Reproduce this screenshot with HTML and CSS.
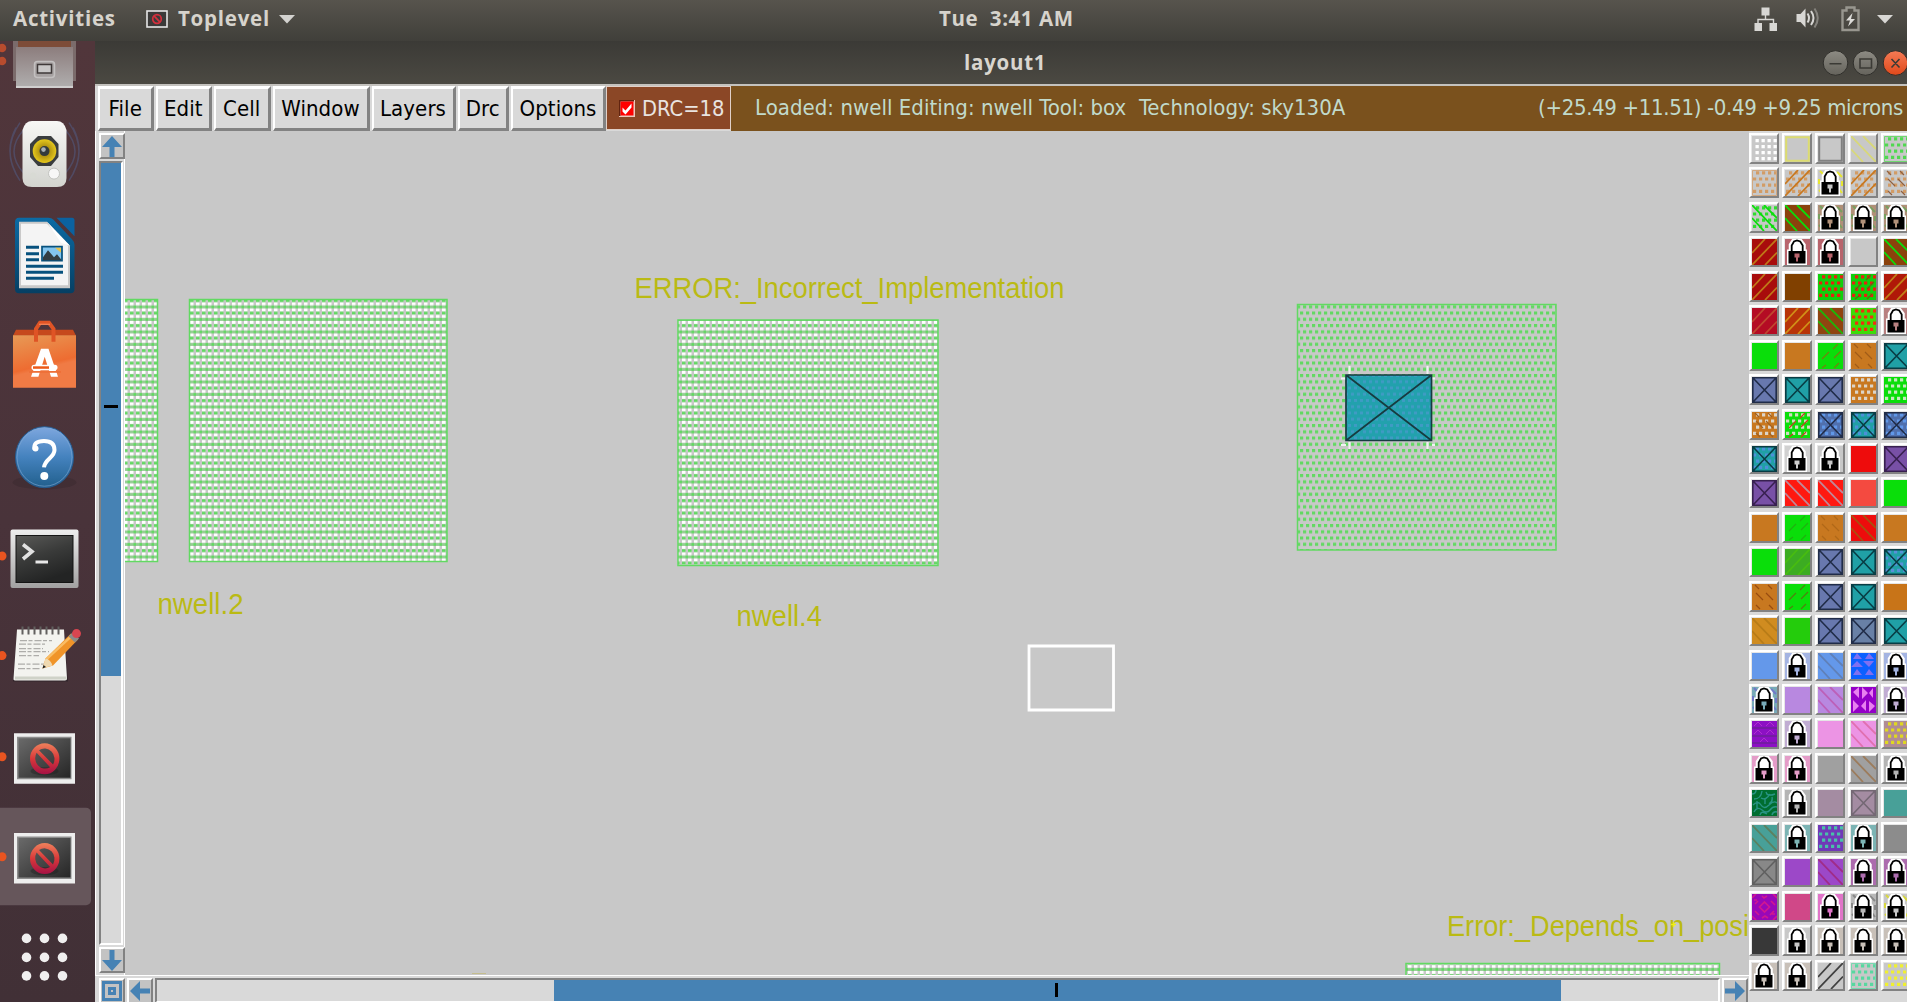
FILE: index.html
```html
<!DOCTYPE html>
<html lang="en">
<head>
<meta charset="utf-8">
<title>layout1</title>
<link rel="stylesheet" href="styles.css">
</head>
<body>
<header class="topbar">
  <span class="activities">Activities</span>
  <svg class="app-icon" width="22" height="18" viewBox="0 0 22 18"><rect x="1" y="1" width="20" height="16" fill="#3b3a39" stroke="#e6e6e6" stroke-width="1.6"/><g fill="none" stroke="#d42f3c" stroke-width="1.7"><circle cx="11" cy="9" r="4.3"/><path d="M8 5.8l6 6.4"/></g></svg>
  <span class="app-name">Toplevel</span>
  <svg class="caret" width="16" height="9" viewBox="0 0 16 9"><path d="M0 0h16L8 8.500z" fill="#d3d2cf"/></svg>
  <span class="clock">Tue&nbsp; 3:41 AM</span>
  <svg class="tray" width="142" height="30" viewBox="1752 4 142 30">
    <g fill="#d8d7d4"><path d="M1761.500 7.500h8v8h-8zM1754.500 23h7.500v8h-7.500zM1769.500 23h7.500v8h-7.500z"/><path d="M1765.500 15v4.500M1758 24v-4.500h15.500v4.500" fill="none" stroke="#d8d7d4" stroke-width="1.400"/>
    <path d="M1796.500 14h4l5-5.500v19l-5-5.500h-4z"/><path d="M1877 15h16l-8 8.500z"/></g>
    <g fill="none" stroke-width="2"><path d="M1807.500 13.500q3 4.500 0 9" stroke="#d8d7d4"/><path d="M1811 11q5 7 0 14" stroke="#d8d7d4"/><path d="M1814.500 8.500q6.500 9.500 0 19" stroke="#85837d"/>
    <path d="M1842.500 10.500h4v-3h8v3h4v19.500h-16z" stroke="#98968f" stroke-width="2.400"/></g>
    <path d="M1852.500 13l-6.500 7.500h4l-2 6 7-7.500h-4z" fill="#dddcd9"/>
  </svg>
</header>
<div class="desktop">
  <nav class="dock" id="dock">
    <svg class="slot" viewBox="0 4 95 100.400"><defs><linearGradient id="drawer" x2="0" y2="1"><stop offset="0" stop-color="#8c7d7d"/><stop offset="1" stop-color="#b0aeae"/></linearGradient></defs>
      <path d="M13 41h63v40H13z" fill="#7b6b6b"/><path d="M18 41h53v6H18z" fill="#7d4c38"/><path d="M16 47h57v40H16z" fill="url(#drawer)"/><path d="M16 86h57v2H16z" fill="#d0cfcf"/>
      <rect x="34.500" y="61.500" width="20" height="16" rx="3" fill="#a6a1a1" stroke="#c3c0c0" stroke-width="1.500"/><rect x="37.500" y="64.500" width="14" height="8.500" fill="#c9c7c7" stroke="#3f3939" stroke-width="1.500"/>
      <g fill="#b84c2e"><circle cx="2" cy="48" r="4.300"/><circle cx="2" cy="61" r="4.300"/></g></svg>
    <svg class="slot" viewBox="0 104.400 95 100.400"><defs><linearGradient id="spk" x2="0" y2="1"><stop offset="0" stop-color="#f7f7f5"/><stop offset="1" stop-color="#d3d4cf"/></linearGradient><radialGradient id="cone"><stop offset="0" stop-color="#8a6c06"/><stop offset="1" stop-color="#e6c81d"/></radialGradient></defs>
      <g fill="none" stroke="#525b84" stroke-width="1.500" opacity=".55"><path d="M20 123q-20 29 0 58M24 130q-20 22 0 44M16 128q-12 23 0 46M69 123q20 29 0 58M65 130q20 22 0 44M73 128q12 23 0 46"/></g>
      <path d="M32 121.500h25q7 0 9.500 9v48q0 9-9.500 9H32q-9.500 0-9.500-9v-48q2.500-9 9.500-9z" fill="url(#spk)"/>
      <path d="M38 136.500h13l7.500 8v13l-7.500 9H38l-8-9v-13z" fill="#3a3d3e"/><circle cx="44.500" cy="151.500" r="11.800" fill="url(#cone)"/><circle cx="44.500" cy="151.500" r="5" fill="#333a3c"/><circle cx="43.500" cy="150" r="2.300" fill="#a9b0b3"/><circle cx="54" cy="174" r="5.500" fill="#f7f7f7" stroke="#c2c3bf"/><circle cx="33" cy="176" r="3" fill="#d8dad4"/></svg>
    <svg class="slot" viewBox="0 204.800 95 100.400"><defs><linearGradient id="writer" x2="0" y2="1"><stop offset="0" stop-color="#0b6ba5"/><stop offset="1" stop-color="#063f63"/></linearGradient></defs>
      <path d="M19 217.500h29.500q3 0 5 2l18 19q3 3 3 6V289q0 4-4 4H19q-4 0-4-4v-67q0-4.500 4-4.500z" fill="url(#writer)"/><path d="M56.500 217.500H72q2.500 0 2.500 2.500v16z" fill="#0b62a0"/>
      <path d="M19 221.500h28l23 24V288H19z" fill="#c9c9c9"/><path d="M21 223.500h26l21 22V285H21z" fill="#f4f4f4"/><path d="M47 221.500v0l23 24-9-3z" fill="#fff"/>
      <g fill="#07517d"><path d="M26 245.500h13v3H26zM26 252h13v3H26zM26 258h13v3H26zM26 264.500h37v3H26zM26 270.500h37v3H26zM26 276.500h28v3H26z"/></g><path d="M42 246.500h20v14H42z" fill="#83c5ef" stroke="#07517d" stroke-width="1.700"/><path d="M55 247.500h6v5z" fill="#e7c24c"/><path d="M43 260v-3l5-7 6 7 3-3 4 5v1z" fill="#333d42"/></svg>
    <svg class="slot" viewBox="0 305.200 95 100.400"><defs><linearGradient id="bag" x2=".3" y2="1"><stop offset="0" stop-color="#e79a56"/><stop offset=".65" stop-color="#ee6c31"/><stop offset=".72" stop-color="#f07b45"/></linearGradient></defs>
      <path d="M16 330h57l3 6H13z" fill="#c6491d"/><path d="M13 335.500h63V388H13z" fill="url(#bag)"/><path d="M36 342v-13l4-6h9l4.500 6v13" fill="none" stroke="#df5425" stroke-width="4"/><path d="M39 324.500h11" stroke="#f28356" stroke-width="1.300"/>
      <path d="M41 349h7.500l9.500 28h-7l-6.300-20-6.300 20H31z" fill="#fff"/><rect x="31.500" y="365" width="26" height="5.500" rx="2.700" fill="#fff"/><path d="M33 366.500h16v2.500H33z" fill="#ec5a18"/><path d="M29 373h32v-1.800H29z" fill="#ee7038"/></svg>
    <svg class="slot" viewBox="0 405.600 95 100.400"><defs><linearGradient id="help" x2="0" y2="1"><stop offset="0" stop-color="#7ea7df"/><stop offset=".5" stop-color="#4482be"/><stop offset="1" stop-color="#215f8c"/></linearGradient></defs>
      <ellipse cx="44.500" cy="482" rx="32" ry="7" fill="#35242b" opacity=".35"/><ellipse cx="44.500" cy="456.800" rx="29" ry="30.500" fill="url(#help)" stroke="#245b91"/><ellipse cx="44.500" cy="456.800" rx="27.500" ry="29" fill="none" stroke="#80a8d4" stroke-width="1" opacity=".6"/>
      <path d="M34.500 449Q33 440.500 44 440.500q10.500 0 10.500 9 0 4-5 8.500t-5.500 9" fill="none" stroke="#fff" stroke-width="4"/><circle cx="35.500" cy="448" r="3" fill="#fff"/><circle cx="44.300" cy="475.500" r="4" fill="#fff"/></svg>
    <svg class="slot" viewBox="0 506 95 100.400"><defs><linearGradient id="tray" x2="0" y2="1"><stop offset="0" stop-color="#eee"/><stop offset="1" stop-color="#a2a1a1"/></linearGradient><linearGradient id="screen" x2=".4" y2="1"><stop offset="0" stop-color="#5a5a58"/><stop offset=".5" stop-color="#3a3b3a"/><stop offset="1" stop-color="#232424"/></linearGradient></defs>
      <rect x="10.500" y="529.500" width="68" height="58.500" rx="2" fill="url(#tray)"/><rect x="16" y="535.500" width="57" height="47" fill="url(#screen)" stroke="#151515"/><path d="M23 544.500l9 7-9 7.500" fill="none" stroke="#e2e2e2" stroke-width="3.600"/><path d="M35.500 560.500h12.500v3H35.500z" fill="#e8e8e8"/><circle class="dot" cx="2" cy="556" r="4.500"/></svg>
    <svg class="slot" viewBox="0 606.400 95 100.400"><path d="M17 631h47l4 51H13z" fill="#31252b"/><path d="M17 630h47l3 49q0 2-2 2H15q-2 0-1.500-2z" fill="#f3f3ef"/><path d="M15 677h51.500v3H15z" fill="#cfd2c8"/>
      <g stroke="#62605f" stroke-width="2" fill="none"><path d="M22.500 627v8M28.500 627v8M34.500 627v8M40.500 627v8M46.500 627v8M52.500 627v8M58.500 627v8"/></g><g stroke="#aeadaa" stroke-width="1.300" stroke-dasharray="7 1.500 4 2"><path d="M20 641h32M19 644.500h26M19 649h24M19 652h30M19 656h20M18 664.500h30M18 669h22"/></g>
      <path d="M42.500 669l3-10L71 634l7 6-25 26z" fill="#f09429"/><path d="M46 660L72 636" stroke="#f9bd65" stroke-width="2.500"/><path d="M42.500 669l3-10q5 1 7 7z" fill="#efd9b1"/><path d="M42.500 669l1-3.500 2.500 2z" fill="#222"/><path d="M68.500 637l4-4 6.500 6-4 4z" fill="#8b8b88"/><circle cx="76.500" cy="634" r="4.500" fill="#d84550"/><circle class="dot" cx="2" cy="656" r="4.500"/></svg>
    <svg class="slot" viewBox="0 706.800 95 100.400"><defs><linearGradient id="dark" x2="1" y2="1"><stop offset="0" stop-color="#6a6a6a"/><stop offset="1" stop-color="#262626"/></linearGradient><linearGradient id="ban" x2="0" y2="1"><stop offset="0" stop-color="#ee815b"/><stop offset=".5" stop-color="#d8383a"/><stop offset="1" stop-color="#a51145"/></linearGradient>
      <g id="generic"><path d="M14 733h61v50.500H14z" fill="#eee"/><path d="M17 736.500h54.500v42.500H17z" fill="#8d8d8d"/><path d="M18.500 738h52v39.500h-52z" fill="url(#dark)"/><ellipse cx="44.500" cy="771" rx="14" ry="4" fill="#1d1d1d" opacity=".4"/><path fill-rule="evenodd" d="M30 758.500a14.700 15.500 0 1 0 29.400 0a14.700 15.500 0 1 0-29.400 0zM39 750a10 10.500 0 0 1 14 14.300zM36.600 752.500l13.500 14.500a10 10.500 0 0 1-13.500-14.500z" fill="url(#ban)"/></g></defs>
      <use href="#generic"/><circle class="dot" cx="2" cy="756.500" r="4.500"/></svg>
    <svg class="slot" viewBox="0 807.200 95 100.400"><rect x="-6" y="808" width="97" height="97.500" rx="5" fill="#66565b"/><use href="#generic" y="100.300"/><circle class="dot" cx="2" cy="857" r="4.500"/></svg>
    <svg class="slot" viewBox="0 907.600 95 100.400"><g fill="#f0efef"><circle cx="26.500" cy="938" r="4.800"/><circle cx="44.500" cy="938" r="4.800"/><circle cx="62.500" cy="938" r="4.800"/><circle cx="26.500" cy="957" r="4.800"/><circle cx="44.500" cy="957" r="4.800"/><circle cx="62.500" cy="957" r="4.800"/><circle cx="26.500" cy="975.500" r="4.800"/><circle cx="44.500" cy="975.500" r="4.800"/><circle cx="62.500" cy="975.500" r="4.800"/></g></svg>
  </nav>
  <main class="window">
    <div class="titlebar"><span class="title">layout1</span>
      <svg class="controls" width="87" height="30" viewBox="1820 47 87 30"><defs><linearGradient id="gb" x2="0" y2="1"><stop offset="0" stop-color="#8d8b83"/><stop offset="1" stop-color="#65635c"/></linearGradient><linearGradient id="rb" x2="0" y2="1"><stop offset="0" stop-color="#f47b55"/><stop offset="1" stop-color="#e0481a"/></linearGradient></defs>
      <g stroke="#302f2b"><circle cx="1835.500" cy="62" r="12.300" fill="url(#gb)"/><circle cx="1865.500" cy="62" r="12.300" fill="url(#gb)"/><circle cx="1895.500" cy="62" r="12.300" fill="url(#rb)"/></g><g stroke="#3b3a35" stroke-width="1.600" fill="none"><path d="M1829.500 62.800h12M1860 58h11.500v9H1860zM1891.500 58l8 8.500M1899.500 58l-8 8.500"/></g></svg>
    </div>
    <div class="menubar">
      <button class="menu m-file">File</button><button class="menu m-edit">Edit</button><button class="menu m-cell">Cell</button><button class="menu m-window">Window</button><button class="menu m-layers">Layers</button><button class="menu m-drc">Drc</button><button class="menu m-options">Options</button>
      <label class="drc"><svg width="16" height="17" viewBox="0 0 16 17"><path d="M0 0h16v17H0z" fill="#e9c9bd"/><path d="M0 0h15v1.500H1.500V16H0z" fill="#612410"/><path d="M1.500 1.500h13v14h-13z" fill="#f00"/><path d="M3.500 7.500l3 3 6-7v4l-6 7-3-3z" fill="#fff"/></svg>DRC=18</label>
      <div class="status"><span class="loaded">Loaded: nwell Editing: nwell Tool: box&nbsp; Technology: sky130A</span><span class="coords">(+25.49 +11.51) -0.49 +9.25 microns</span></div>
    </div>
    <div class="workspace">
      <div class="view">
        <div class="upper">
          <div class="vscroll">
            <button class="arrow"><svg width="20" height="21" viewBox="0 0 20 21"><path d="M10 0l10 11h-7.500v10h-5V11H0z"/></svg></button>
            <div class="vtrack"><div class="vthumb"><i class="vmark"></i></div></div>
            <button class="arrow"><svg width="20" height="21" viewBox="0 0 20 21"><path d="M10 21L0 10h7.500V0h5v10H20z"/></svg></button>
          </div>
          <svg class="canvas" width="1624" height="844" viewBox="125 131 1624 844">
            <defs>
              <pattern id="dense" width="6" height="12.500" patternUnits="userSpaceOnUse" x="682" y="321"><path d="M0 0h3.500v3H0zM0 6.300h3.500v3H0z" fill="#fff"/><path d="M0 3.200h3.500v2.800H0z" fill="#62d962"/><path d="M0 9.500h6v2.800H0z" fill="#95cd93"/><path d="M3.500 9.500h2.500v2.800H3.500z" fill="#62d962"/></pattern>
              <pattern id="sparse" width="6" height="12.500" patternUnits="userSpaceOnUse" x="1300" y="311.500"><path d="M0 0h3.200v3.200H0zM3 6.250h3v3.200H3zM0 6.250h.2v3.200H0z" fill="#62d962"/></pattern>
              <pattern id="blue" width="6" height="12.500" patternUnits="userSpaceOnUse" x="1300" y="311.500"><path d="M0 0h3v3H0zM3 6.250h3v3H3z" fill="#3f9bc4"/></pattern>
            </defs>
            <g fill="url(#dense)" stroke="#62d962" stroke-width="1.500"><path d="M120 299.500h37.500V561.500H120z"/><path d="M189.500 561.500v-262h257.500v262z"/><path d="M678 320h260v245.500H678z"/><path d="M1406 980v-16.500h313.500V980"/></g>
            <path d="M1297.500 304.500h258.500v245.500h-258.500z" fill="url(#sparse)" stroke="#62d962" stroke-width="1.500"/>
            <path d="M1349.500 366v8M1427.500 366v8M1349.500 442v7M1427.500 442v7M1341 378.500h5M1432 378.500h3M1341 445h5M1432 445h3" stroke="#f2f2f2" stroke-width="2"/>
            <path d="M1346 375h85.500v65.500H1346z" fill="#22a1ad"/><path d="M1346 375h85.500v65.500H1346z" fill="url(#blue)"/><path d="M1346 375h85.500v65.500H1346zl85.500 65.500M1431.500 375L1346 440.500" fill="none" stroke="#173b40" stroke-width="1.700"/>
            <path d="M1029 646h84.500v64H1029z" fill="none" stroke="#fff" stroke-width="2.800"/>
            <path d="M472 973.500h14" stroke="#c4bd8e"/>
            <g class="label">
              <text x="634.500" y="298" textLength="430" lengthAdjust="spacingAndGlyphs">ERROR:_Incorrect_Implementation</text>
              <text x="157.500" y="613.500" textLength="86" lengthAdjust="spacingAndGlyphs">nwell.2</text>
              <text x="736.500" y="626" textLength="85.500" lengthAdjust="spacingAndGlyphs">nwell.4</text>
              <text x="1447" y="936" textLength="302" lengthAdjust="spacingAndGlyphs">Error:_Depends_on_posi</text>
            </g>
            <path d="M1671 924.500h5M1673.500 922v5" stroke="#efef13" stroke-width="1.500"/>
          </svg>
        </div>
        <div class="hscroll">
          <button class="arrow corner"><svg width="20" height="20" viewBox="0 0 20 20"><path d="M1.500 1.500h17v17h-17z" fill="none" stroke="#4682b4" stroke-width="3"/><path d="M7.500 7.500h5v5h-5z" fill="none" stroke="#4682b4" stroke-width="3"/></svg></button>
          <button class="arrow"><svg width="20" height="20" viewBox="0 0 20 20"><path d="M0 10L10 0v7.500h10v5H10V20z"/></svg></button>
          <div class="htrack"><div class="hthumb"><i class="hmark"></i></div></div>
          <button class="arrow"><svg width="20" height="20" viewBox="0 0 20 20"><path d="M20 10L10 0v7.500H0v5h10V20z"/></svg></button>
        </div>
      </div>
      <div class="palette" id="palette"></div>
    </div>
  </main>
</div>
<script src="palette.js"></script>
</body>
</html>
```
FILE: styles.css
```css
* { box-sizing: border-box; }
body { margin: 0; width: 1907px; height: 1002px; overflow: hidden; background: #c8c8c8; font-family: "DejaVu Sans Condensed", "DejaVu Sans", sans-serif; font-stretch: condensed; }
svg { display: block; flex: none; }
button { font: inherit; padding: 0; margin: 0; border: 0; border-radius: 0; }
.topbar { height: 41px; display: flex; align-items: center; padding: 0 13px; background: linear-gradient(#57544d, #403f3a); color: #d6d3cc; font: bold 20.500px/37px "Open Sans", "Noto Sans", sans-serif; letter-spacing: .75px; }
.topbar > span { height: 41px; white-space: nowrap; }
.activities { width: 133px; }
.app-icon { margin-top: -3px; }
.app-name { margin-left: 10px; width: 101px; }
.caret { margin-top: -3px; }
.clock { margin-left: 644px; letter-spacing: .55px; }
.tray { margin-left: auto; margin-top: -3px; }
.desktop { display: flex; height: 961px; }
.dock { width: 95px; height: 961px; overflow: hidden; background: linear-gradient(#51363b, #49333a 50%, #413036); }
.slot { width: 95px; height: 100.400px; }
.slot:first-child { margin-top: -37px; }
.dot { fill: #e95420; }
.window { width: 1812px; display: flex; flex-direction: column; }
.titlebar { height: 43px; display: flex; align-items: center; justify-content: flex-end; background: linear-gradient(#3b3a36, #4b4942); color: #d9d6cf; font: bold 20.500px/43px "Open Sans", "Noto Sans", sans-serif; letter-spacing: .75px; }
.title { flex: 1; padding-left: 869px; }
.menubar { height: 47px; display: flex; background: #d9d9d9; border-top: 2px solid #c4c2be; padding-left: 3px; font-size: 22px; }
.menu { height: 45px; margin-right: 2px; background: #d9d9d9; color: #000; border: solid; border-width: 3px 3px 3px 2px; border-color: #fff #828282 #828282 #fff; padding-bottom: 1px; letter-spacing: .1px; }
.m-file { width: 55.500px; } .m-edit { width: 56.500px; } .m-cell { width: 56.500px; } .m-window { width: 97px; } .m-layers { width: 84px; } .m-drc { width: 51.500px; } .m-options { width: 95px; margin-right: 0; }
.drc { width: 125px; height: 44px; display: flex; align-items: center; padding: 1px 0 0 12px; background: #8b4726; border: 1px solid #e0d0c8; color: #e9e4e0; gap: 7px; white-space: nowrap; font-size: 21.700px; }
.status { flex: 1; display: flex; justify-content: space-between; padding: 0 4px 0 24px; line-height: 44px; background: #7a511d; color: #c1dacb; white-space: nowrap; }
.loaded { letter-spacing: .03px; }
.coords { letter-spacing: -.35px; }
.workspace { display: flex; height: 871px; }
.view { width: 1654px; display: flex; flex-direction: column; }
.upper { display: flex; height: 844px; }
.vscroll { width: 30px; padding: 2px 0 0 3px; display: flex; flex-direction: column; gap: 2px; background: #d9d9d9; border-left: 1px solid #fff; border-right: 1px solid #fff; }
.arrow { width: 26px; height: 26px; display: flex; align-items: center; justify-content: center; background: #c3c3c3; border: 2px solid; border-color: #fff #828282 #828282 #fff; flex: none; fill: #4682b4; }
.vtrack { width: 24px; height: 784px; border: 2px solid; border-color: #828282 #fff #fff #828282; background: #d9d9d9; }
.vthumb { width: 20px; height: 513px; padding: 242px 3px 0; background: #4682b4; }
.vmark { display: block; height: 3px; background: #000; }
.canvas { background: #c8c8c8; overflow: hidden; }
.label { font: 29.500px "Liberation Sans", Arial, sans-serif; fill: #baba14; }
.hscroll { height: 27px; display: flex; gap: 2px; align-items: flex-start; padding: 2px 0 0 4px; background: #d9d9d9; border-top: 1px solid #fff; }
.htrack { width: 1565px; height: 25px; padding-left: 397px; border: 2px solid; border-color: #828282 #fff #fff #828282; background: #d9d9d9; }
.hthumb { width: 1007px; height: 21px; padding: 3px 0 0 501px; background: #4682b4; }
.hmark { display: block; width: 3px; height: 14px; background: #000; }
.palette { width: 158px; height: 871px; overflow: hidden; display: grid; grid-template-columns: repeat(5, 33px); grid-auto-rows: 34.440px; padding: 2px 0 0; background: #d9d9d9; }
.cell { width: 30px; height: 31px; padding: 1px; border: 2px solid; border-color: #fff #828282 #828282 #fff; background: #e6e6e6; }
.cell svg { width: 25px; height: 26px; }
```
FILE: palette.js
```javascript
// Each row lists five layers: "fill pattern:colour pattern:colour ..."
const G = '#c8c8c8', GR = '#0ade0a', OR = '#c87820', BL = '#6878ae X:#202c48', TE = '#20a0a6 X:#083c44';
const rows = [
  [G + ' grid:#fff', G + ' box:#dcdc70', G + ' box:#808080', G + ' b:#d8d878', G + ' dots:#50d850 edge:#70d870'],
  [G + ' dots:#d29c66 edge:#d2a880', G + ' dots:#d29c66 f:#c87820', G + ' corners:#e6e632 lock', G + ' dots:#d29c66 f:#c87820', G + ' dots:#d29c66 db:#906040'],
  [G + ' dots:#30dc30 b:#0ade0a', '#8b420c b:#0ade0a', '#b09078 corners:#78a060 lock', '#b09078 corners:#78a060 lock', '#b09078 corners:#78a060 lock'],
  ['#a80c0c f:#c07818', '#b8646c lock', '#b8646c lock', G, '#8b420c b:#0ade0a'],
  ['#a80c0c f:#c07818', '#804000', '#10d00c dots:#e82010', '#10d00c dots:#e82010 df:#706010', '#b01808 f:#c08018'],
  ['#b40c24 f:#c04830', '#b83408 f:#d09018', '#904410 b:#1cb808', '#3cdc08 dots:#f03010', '#b88080 lock'],
  [GR, OR, GR + ' df:#748010', OR + ' db:#a05c18', TE],
  [BL, TE, BL, OR + ' dots:#dcd4c8', GR + ' dots:#c8e8c0'],
  [OR + ' dots:#dcd4c8 db:#a06020', GR + ' dots:#d0dcc0 df:#c04020', '#5070ae dots:#6098e8 X:#202c48', '#20a0a6 dots:#4c90d8 X:#083c44', '#5070ae dots:#6098e8 X:#202c48'],
  ['#20a0a6 dots:#4c90d8 X:#083c44', '#d0d0d0 lock', G + ' lock', '#ee0c0c', '#7850a6 X:#382050'],
  ['#7850a6 X:#382050', '#ff1810 b:#c08898', '#ff1810 b:#c08898', '#f44a40', GR],
  [OR, GR + ' df:#20b010', OR + ' db:#b06818', '#ee0c0c b:#a85010', OR],
  [GR, '#3cac22 f:#48bc10', BL, TE, '#20a0a6 dots:#5890d8 X:#083c44'],
  [OR + ' db:#984c10', GR + ' df:#508010', BL, TE, '#c87418'],
  ['#d08c20 b:#b87c18', '#24cc0c', BL, '#6880a6 X:#202c48', TE],
  ['#6498ea', '#a4b4e2 lock', '#6498ea b:#6080b8', '#0c60ff tri:#8070f0', '#a4b4e2 lock'],
  ['#78aab8 corners:#7078c8 lock', '#b888e0', '#b888e0 b:#bc60b8', '#9400c8 bow:#e880f0', '#c0acd2 lock'],
  ['#8c10c4 wave:#6c2098', '#c0acd2 lock', '#ec94e4', '#ec94e4 b:#e070b0', '#b08c94 dots:#e0d820'],
  ['#e49cc8 lock', '#e49cc8 lock', '#a0a0a0', '#a0a0a0 b:#9c7c5c', '#b4b4b4 lock'],
  ['#006e30 maze:#289484', '#b4b4b4 lock', '#a48ca2', '#a48ca2 X:#746874', '#48a098'],
  ['#48a098 b:#5c8060', '#7cb4b4 lock', '#7038b8 dots:#48c0a8', '#7cb4b4 lock', '#8c8c8c'],
  ['#888888 X:#606060', '#9c48c8', '#9c48c8 b:#a02c88', '#ac6cae lock', '#ac6cae lock'],
  ['#9808b8 rings:#d01890', '#d04888', '#e074c8 lock', '#b8b8b8 corners:#888 lock', G + ' corners:#d8d840 lock'],
  ['#383838', G + ' lock', '#c8c0b8 lock', '#c8c0b8 lock', '#c8c0b8 lock'],
  ['#c8c0b8 lock', '#c8c0b8 lock', G + ' f:#404040', G + ' dots:#58d8a0 edge:#78d8b0', G + ' dots:#f0f030']
];

const stroke = (d, c, w) => `<path d="${d}" stroke="${c}" stroke-width="${w}" fill="none"/>`;
const solid = (d, c) => `<path d="${d}" fill="${c}"/>`;
const square = (x, y, s) => `M${x} ${y}h${s}v${s}h-${s}z`;

function dots() {
  let d = '';
  for (let r = 0; r < 4; r++)
    for (let x = r % 2 ? 1 : 4; x < 25; x += 6) d += square(x, r * 6.2 + 1.2, 3.2);
  return d;
}
function grid() {
  let d = '';
  for (let r = 0; r < 4; r++) for (let c = 0; c < 4; c++) d += square(3.5 + c * 6, 3 + r * 6, 3.3);
  return d;
}

const draw = {
  dots: c => solid(dots(), c),
  grid: c => solid(grid(), c),
  box: c => stroke('M1.2 1.200h22.600v23.600h-22.600z', c, 2),
  edge: c => stroke('M.5.500h24v25H.500z', c, 1),
  f: c => stroke('M0 14L13 0M0 26L25 0M13 26L25 13.500', c, 1.800),
  b: c => stroke('M12 0L25 13M0 0L25 26M0 13L12 26', c, 1.800),
  df: c => stroke('M4 16L11 9M15 6l5-5M16 15l7-7M4 25l4-3M16 25l5-5', c, 1.200),
  db: c => stroke('M3 1l4 4M4 9l7 7M16 1l4 4M14 9l7 7M4 21l4 4M17 21l4 4', c, 1.200),
  X: c => stroke('M.8.8h23.400v24.400H.8zL24.200 25.200M24.200.8L.8 25.200', c, 1.600),
  corners: c => stroke('M2 1l4 4M19 2l5 5M1 20l4 4M21 19l3 4M1 9v5M24 11v5', c, 2),
  tri: c => solid('M2 6h9L6 0zM14 6h9L18 0zM0 14l6-6 6 6zM12 8h11l-5 6zM2 22h9l-5-6zM14 22h9l-5-6z', c),
  bow: c => solid('M8 0v11L2 5zM11 0l6 6-6 6zM22 1v10l-4-5zM2 13l6 6-6 6zM15 13v11l-5-5zM18 14l6 5-6 6z', c),
  wave: c => stroke('M0 7h25M0 15h25M0 22h25', c, 1.500) + stroke('M2 5l4-4 4 4M14 5l4-4 4 4M2 13l4-4 4 4M14 13l4-4 4 4M8 21l4-4 4 4', '#b030d0', 1),
  maze: c => stroke('M0 4q4 0 4-4M2 9q7 0 8-8M9 8q5 3 9-4M14 2q1 5 9 2M1 15q5-5 8 0t8 0 8-2M2 22q3-6 8-2t8 0 7-3M8 25q1-5 7-1M20 25q1-4 5-3M13 9v5M20 7q1 5-3 7M5 11v7', c, 1.400),
  rings: c => stroke('M12.500 8l5 5-5 5-5-5zM0 4l4-4M21 0l4 4M0 22l4 4M21 26l4-4M3 10l3-3M19 7l4 4M3 17l4 4M22 17l-4 4M10 2l2 2 3-2M10 24l3-2 3 2M2 6h3M20 20h3', c, 1.700),
  lock: (c, bg) => '<path d="M6 12.500V6L8.500 2l3.500-1.500L15.500 2l3 4v6.500" fill="#fff" stroke="#fff" stroke-width="4.500"/><path d="M2 10.500h20v15.500H2z" fill="#fff"/><path d="M6.700 13V6.500L9 2.500l3-1 3.200 1 2.500 4V13" fill="#fff" stroke="#000" stroke-width="1.800"/><path d="M3.500 12h17v12.500h-17z"/>' + solid('M9.500 14.500h5v4H13v4h-2v-4H9.500z', bg)
};

document.getElementById('palette').innerHTML = rows.flat().map(spec => {
  const [bg, ...layers] = spec.split(' ');
  const art = layers.map(l => { const [kind, color] = l.split(':'); return draw[kind](color, bg); }).join('');
  return `<div class="cell"><svg viewBox="0 0 25 26"><path d="M0 0h25v26H0z" fill="${bg}"/>${art}</svg></div>`;
}).join('');
```
